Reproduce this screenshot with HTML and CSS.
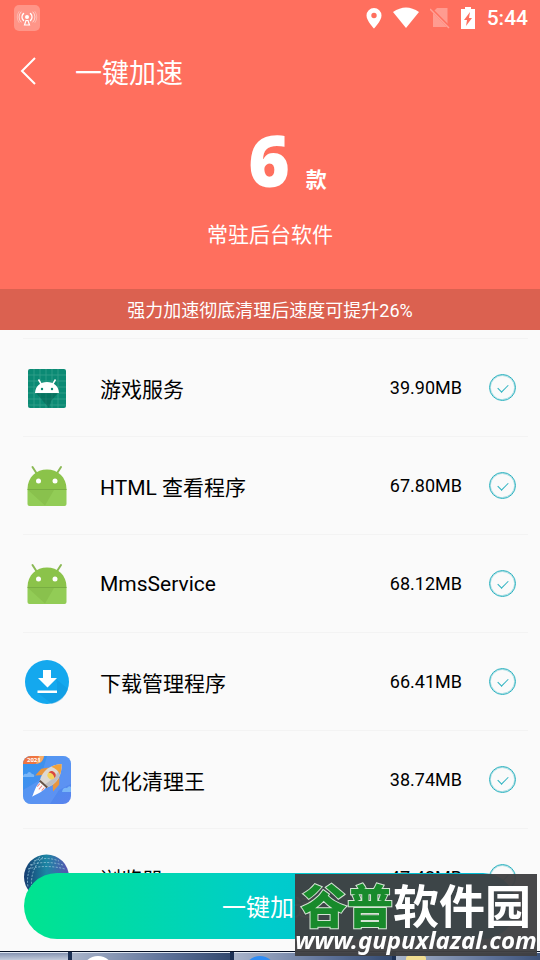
FILE: index.html
```
<!DOCTYPE html>
<html lang="zh-CN">
<head>
    <meta charset="UTF-8">
    <meta name="viewport" content="width=device-width, initial-scale=1.0">
    <title>一键加速</title>
    <link rel="stylesheet" href="styles.css">
</head>
<body>

    <!-- shared icons -->
    <svg class="defs" width="0" height="0" aria-hidden="true">
        <symbol id="android" viewBox="0 0 48 48">
            <path d="M9.500 5l4.500 7M38 5l-4.500 7" stroke="#8bb955" stroke-width="2" stroke-linecap="round"/>
            <path d="M4.500 27C4.500 15 13.500 7.500 24 7.500S43.500 15 43.500 27z" fill="#8bc34a"/>
            <path d="M4.500 27h39v15a2 2 0 0 1-2 2h-35a2 2 0 0 1-2-2z" fill="#92cc56"/>
            <path d="M5 28h26L22 43.500z" fill="#89c14d"/>
            <path d="M4.500 27.500h39" stroke="#78ad42"/>
            <circle cx="15.500" cy="19" r="2.500" fill="#fff"/>
            <circle cx="32" cy="19" r="2.500" fill="#fff"/>
        </symbol>
    </svg>

    <header class="header">
        <div class="status-bar">
            <svg class="cast" width="26" height="26" viewBox="0 0 26 26" fill="none" stroke="#fff" stroke-linecap="round">
                <rect width="26" height="26" rx="5" fill="#ff9588" stroke="none"/>
                <path d="M9.500 8.500a5 5 0 0 0 0 7M16.500 8.500a5 5 0 0 1 0 7" stroke-width="1.500"/>
                <path d="M7 7a7 7 0 0 0 0 10M19 7a7 7 0 0 1 0 10" opacity=".6"/>
                <path d="M5 6.500a9 9 0 0 0 0 11M21 6.500a9 9 0 0 1 0 11" opacity=".3"/>
                <circle cx="13" cy="12" r="2" fill="#fff" stroke="none"/>
                <path d="M12 15.500h2l1.500 4.500h-5z" stroke-width="1.200"/>
            </svg>
            <div class="status-icons">
                <svg width="16" height="22" viewBox="0 0 16 22">
                    <path d="M8 1a7.500 7.500 0 0 0-7.500 7.500C.5 14 8 21.500 8 21.500s7.500-7.500 7.500-13A7.500 7.500 0 0 0 8 1zm0 4.800a2.700 2.700 0 1 1 0 5.400 2.700 2.700 0 0 1 0-5.400z" fill="#fff"/>
                </svg>
                <svg width="26" height="22" viewBox="0 0 26 22">
                    <path d="M0 5Q13-4 26 5L13 21z" fill="#fff"/>
                </svg>
                <svg width="20" height="22" viewBox="0 0 20 22">
                    <path d="M7 1h10.500v19H3V5z" fill="#ff9b90"/>
                    <path d="M1 2l18 18" stroke="#ff6f5e" stroke-width="3"/>
                    <path d="M0 2l19 19" stroke="#ffa197" stroke-width="1.500"/>
                </svg>
                <svg width="14" height="22" viewBox="0 0 14 22">
                    <path d="M4 0h6v2h4v20H0V2h4z" fill="#fff"/>
                    <path d="M9 5l-6 8h3l-1 6 6-8H8z" fill="#ff6f5e"/>
                </svg>
            </div>
            <span class="time">5:44</span>
        </div>

        <div class="title-bar">
            <button class="back" type="button" aria-label="返回">
                <svg width="16" height="28" viewBox="0 0 16 28" fill="none" stroke="#fff" stroke-width="2">
                    <path d="M15 1L2 14l13 13"/>
                </svg>
            </button>
            <h1>一键加速</h1>
        </div>

        <div class="hero">
            <div class="count"><strong>6</strong><span>款</span></div>
            <p>常驻后台软件</p>
        </div>
        <p class="banner">强力加速彻底清理后速度可提升26%</p>
    </header>

    <main>
        <ul class="app-list">
            <li class="app">
                <svg class="app-icon" viewBox="0 0 48 48">
                    <rect x="5" y="5" width="38" height="39" rx="2" fill="#0b8a74"/>
                    <path d="M11 5v39M17 5v39M23 5v39M29 5v39M35 5v39M5 11h38M5 17h38M5 23h38M5 29h38M5 35h38M5 41h38" stroke="#3ba38f" stroke-width=".7"/>
                    <path d="M13 29h22l-7 8-2 7z" fill="#00574a" opacity=".45"/>
                    <path d="M12 29c.5-7 5-11 12-11s11.500 4 12 11z" fill="#fff"/>
                    <path d="M15.500 15.500l3 5M32.500 15.500l-3 5" stroke="#fff" stroke-width="1.500"/>
                    <circle cx="19" cy="25" r="1.200" fill="#0b8a74"/>
                    <circle cx="29" cy="25" r="1.200" fill="#0b8a74"/>
                </svg>
                <label for="app1">游戏服务</label>
                <span class="size">39.90MB</span>
                <input type="checkbox" id="app1" checked>
            </li>
            <li class="app">
                <svg class="app-icon"><use href="#android"/></svg>
                <label for="app2">HTML 查看程序</label>
                <span class="size">67.80MB</span>
                <input type="checkbox" id="app2" checked>
            </li>
            <li class="app">
                <svg class="app-icon"><use href="#android"/></svg>
                <label for="app3">MmsService</label>
                <span class="size">68.12MB</span>
                <input type="checkbox" id="app3" checked>
            </li>
            <li class="app">
                <svg class="app-icon" viewBox="0 0 48 48">
                    <circle cx="24" cy="24" r="22" fill="#14a8ee"/>
                    <path d="M33 21l12 10a22 22 0 0 1-16 15L15 35h19V25z" fill="#0c92d8" opacity=".4"/>
                    <path d="M20 12h8v8h6l-9.500 9.500L15 20h5zM14.500 32.500h19.500v2.500H14.500z" fill="#fff"/>
                </svg>
                <label for="app4">下载管理程序</label>
                <span class="size">66.41MB</span>
                <input type="checkbox" id="app4" checked>
            </li>
            <li class="app">
                <svg class="app-icon" viewBox="0 0 48 48">
                    <defs>
                        <clipPath id="tile"><rect width="48" height="48" rx="8"/></clipPath>
                        <linearGradient id="sky" x1="0" y1="0" x2="1" y2="1">
                            <stop offset="0" stop-color="#3197ef"/>
                            <stop offset="1" stop-color="#5b83ee"/>
                        </linearGradient>
                    </defs>
                    <g clip-path="url(#tile)">
                        <rect width="48" height="48" fill="url(#sky)"/>
                        <path d="M24 0h24v28L36 34 27 48H0V34l17-10z" fill="#6a9bf5" opacity=".5"/>
                        <path d="M0 20q1-3 4-2 2-4 5 0 3 0 2 3H0zM39 36q1-5 5-4 2-3 4-1v5z" fill="#79b6f7"/>
                        <path d="M0 0h21q-1 8-10 8H0z" fill="#ef7540"/>
                        <path d="M16 0h5q-1 7-8 8z" fill="#f6ad67"/>
                        <text x="4" y="6" class="tile-year">2021</text>
                        <g transform="translate(26.500 21.500) rotate(42)">
                            <path d="M-6 2l-6 6 0-9 5-6zM6 2l6 6 0-9-5-6z" fill="#e8953f"/>
                            <path d="M-4 9h8c1 6-2 11-4 17-2-6-5-11-4-17z" fill="#fff"/>
                            <path d="M-5 9C-10 0-8-10 0-18 8-10 10 0 5 9z" fill="#ddd9d3"/>
                            <path d="M0-18C8-10 10 0 5 9H1C5-3 3-12 0-18z" fill="#bfbfc2"/>
                            <path d="M-6-9Q-4-14 0-18 4-14 6-9 0-12-6-9z" fill="#f0a23c"/>
                            <path d="M-5 8H5v2H-5z" fill="#675347"/>
                            <path d="M-3 11v4M0 11v5M3 11v4" stroke="#ec8c8c"/>
                            <circle cy="-3" r="4" fill="#f5d45a"/>
                            <path d="M-4-3a4 4 0 0 1 8 0q-4-3-8 0z" fill="#d74642"/>
                        </g>
                    </g>
                </svg>
                <label for="app5">优化清理王</label>
                <span class="size">38.74MB</span>
                <input type="checkbox" id="app5" checked>
            </li>
            <li class="app">
                <svg class="app-icon" viewBox="0 0 48 48">
                    <defs>
                        <linearGradient id="globe" x1="0" y1="0" x2="1" y2="0">
                            <stop offset="0" stop-color="#163c70"/>
                            <stop offset=".5" stop-color="#1c86a4"/>
                            <stop offset="1" stop-color="#5b52b0"/>
                        </linearGradient>
                    </defs>
                    <circle cx="23.500" cy="23" r="22.500" fill="url(#globe)"/>
                    <g fill="none" stroke="#9cc9da" stroke-width=".8" stroke-dasharray="2 1.500">
                        <path d="M11 7q12-5 25 0M7 11q16-5 33 0M5 15q18-5 37 0"/>
                        <path d="M17 3Q2 14 5 33M20 3Q6 16 9 36"/>
                    </g>
                </svg>
                <label for="app6">浏览器</label>
                <span class="size">47.42MB</span>
                <input type="checkbox" id="app6" checked>
            </li>
        </ul>
    </main>

    <footer class="footer">
        <button class="boost" type="button">一键加速</button>
        <div class="taskbar">
            <span class="task task-start"></span>
            <span class="task task-white"></span>
            <span class="task task-blue"></span>
            <span class="task task-folder"></span>
        </div>
        <div class="watermark">
            <div class="brand"><b>谷普</b>软件园</div>
            <div class="site">www.gupuxlazal.com</div>
        </div>
    </footer>

</body>
</html>
```

FILE: styles.css
```
* {
    box-sizing: border-box;
}

body {
    margin: 0;
    min-height: 100vh;
    background-color: #fafafa;
    color: #000;
    font-family: Roboto, "Noto Sans CJK SC", sans-serif;
}

h1, p, ul {
    margin: 0;
    padding: 0;
    font-weight: normal;
}

button {
    border: 0;
    padding: 0;
    background: none;
    color: inherit;
    font-family: inherit;
}

svg {
    display: block;
}

.defs {
    position: absolute;
}

/* Header */
.header {
    background-color: #ff6f5e;
    color: #fff;
}

.status-bar {
    display: flex;
    align-items: center;
    height: 36px;
    padding: 0 12px 0 14px;
}

.status-icons {
    display: flex;
    gap: 11px;
    margin-left: auto;
}

.time {
    margin-left: 12px;
    font-size: 21px;
    font-weight: 500;
}

.title-bar {
    display: flex;
    align-items: center;
    gap: 39px;
    height: 70px;
    padding-left: 20px;
}

.title-bar h1 {
    font-size: 27px;
}

.hero {
    height: 183px;
    padding-top: 12px;
    text-align: center;
}

.count {
    display: flex;
    justify-content: center;
    align-items: baseline;
    gap: 16px;
    height: 99px;
    padding-left: 35px;
    line-height: 84px;
    font-weight: bold;
}

.count strong {
    font-family: "Noto Sans", sans-serif;
    font-size: 71px;
}

.count span {
    font-size: 21px;
}

.hero p {
    font-size: 21px;
    line-height: 36px;
}

.banner {
    height: 41px;
    background-color: #db6150;
    font-size: 18px;
    line-height: 43px;
    text-align: center;
}

/* App list */
.app-list {
    padding: 8px 12px 0 23px;
    list-style: none;
}

.app {
    display: flex;
    align-items: center;
    height: 98px;
    padding-right: 12px;
    border-top: 1px solid #f3f3f3;
}

.app-icon {
    width: 48px;
    height: 48px;
}

.app label {
    flex: 1;
    margin-left: 29px;
    font-size: 21px;
}

.size {
    font-size: 18px;
}

.app input {
    appearance: none;
    display: grid;
    place-items: center;
    width: 27px;
    height: 27px;
    margin: 0 0 0 27px;
    border: 1px solid #2cb2c0;
    border-radius: 50%;
    box-shadow: inset 0 0 0 1px rgba(44, 178, 192, 0.4);
}

.app input:checked::after {
    content: "";
    width: 9px;
    height: 5px;
    border: solid #2cb2c0;
    border-width: 0 0 1px 1px;
    transform: translateY(-1px) rotate(-45deg);
}

.tile-year {
    fill: #fff;
    font: bold 6px "Noto Sans", sans-serif;
}

/* Bottom button and taskbar */
.footer {
    position: fixed;
    left: 0;
    right: 0;
    bottom: 0;
}

.boost {
    display: block;
    width: calc(100% - 48px);
    height: 66px;
    margin: 0 24px 12px;
    padding-bottom: 2px;
    border-radius: 33px;
    background: linear-gradient(to right, #00e48f, #00cccc 50%, #00b9d6);
    color: #fff;
    font-size: 24px;
}

.taskbar {
    display: flex;
    gap: 4px;
    height: 9px;
    border-top: 1px solid #071126;
    background-color: #1c3054;
    overflow: hidden;
}

.task {
    flex: 0 0 158px;
    padding-left: 10px;
    border-top: 1px solid #dfe6f1;
    background: linear-gradient(to right, #a9b4ca, #5d7199 60%, #33496f);
}

.task::before {
    content: "";
    display: block;
    width: 32px;
    height: 32px;
    margin-top: 3px;
    border-radius: 50%;
}

.task-start {
    flex-basis: 68px;
    background: linear-gradient(#8795b3, #c3cbdb);
}

.task-white::before {
    background: radial-gradient(circle at 50% 60%, #3c86dc 12px, #fff 13px);
}

.task-blue::before {
    background-color: #2f8cf3;
}

.task-folder::before {
    width: 20px;
    border-radius: 2px;
    background-color: #f1dc91;
}

/* Site mark over the bottom corner */
.watermark {
    position: absolute;
    right: 3px;
    bottom: 4px;
    width: 242px;
    height: 82px;
    background-color: rgba(64, 64, 66, 0.96);
    color: #fff;
    font-family: "Noto Sans", "Noto Sans CJK SC", sans-serif;
    font-weight: bold;
    font-style: italic;
    text-align: center;
    white-space: nowrap;
}

.brand {
    font-size: 46px;
    font-style: oblique 6deg;
    line-height: 62px;
    height: 52px;
}

.brand b {
    color: #188a2b;
    -webkit-text-stroke: 2px #d4e4d4;
    paint-order: stroke;
}

.site {
    font-size: 24px;
    line-height: 28px;
}
```
